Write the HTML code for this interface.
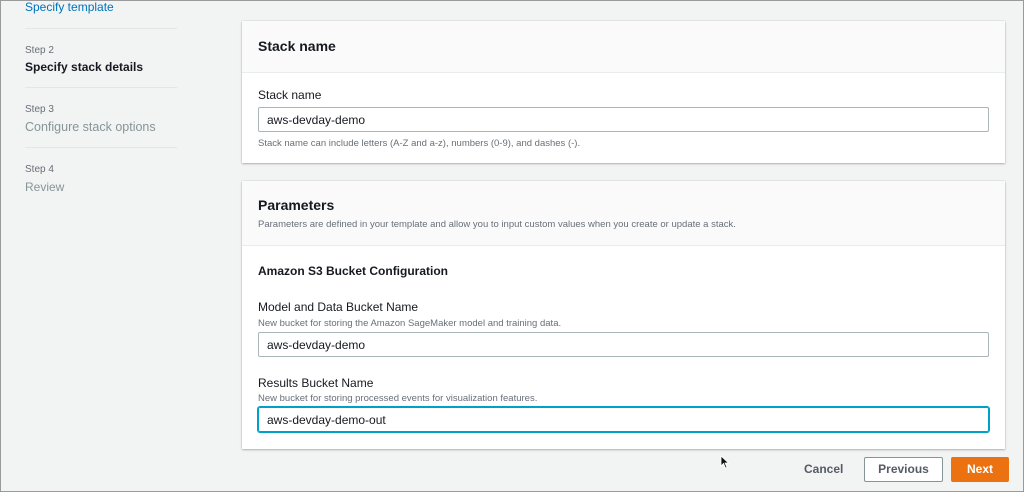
<!DOCTYPE html>
<html><head><style>
*{margin:0;padding:0;box-sizing:border-box}
body{width:1024px;height:492px;background:#f2f3f3;font-family:"Liberation Sans",Arial,sans-serif;position:relative;overflow:hidden;border:1px solid #9a9a9a;color:#16191f}
.a{position:absolute;white-space:nowrap}
.hr{position:absolute;left:24px;width:152px;height:1px;background:#e4e6e6}
.panel{position:absolute;left:241px;width:763px;background:#fff;box-shadow:0 1px 2px rgba(0,0,0,.25),0 0 1px rgba(0,0,0,.2)}
.ph{background:#fafafa;border-bottom:1px solid #eaeded}
.inp{position:absolute;left:16px;width:731px;height:25px;border:1px solid #aab7b8;border-radius:2px;font-size:12px;padding:5px 8px}
.small{font-size:9.5px;color:#687078}
</style></head><body>
<div class="a" style="left:24px;top:-1px;font-size:12px;color:#0073bb">Specify template</div>
<div class="hr" style="top:27px"></div>
<div class="a" style="left:24px;top:44px;font-size:10px;color:#687078">Step 2</div>
<div class="a" style="left:24px;top:59px;font-size:12px;font-weight:bold">Specify stack details</div>
<div class="hr" style="top:86px"></div>
<div class="a" style="left:24px;top:103px;font-size:10px;color:#687078">Step 3</div>
<div class="a" style="left:24px;top:119px;font-size:12.5px;color:#879596">Configure stack options</div>
<div class="hr" style="top:146px"></div>
<div class="a" style="left:24px;top:163px;font-size:10px;color:#687078">Step 4</div>
<div class="a" style="left:24px;top:179px;font-size:12px;color:#879596">Review</div>

<div class="panel" style="top:20px;height:142px">
  <div class="ph" style="height:52px"><div class="a" style="left:16px;top:17px;font-size:14px;font-weight:bold">Stack name</div></div>
  <div class="a" style="left:16px;top:67px;font-size:12px">Stack name</div>
  <div class="inp" style="top:86px">aws-devday-demo</div>
  <div class="a small" style="left:16px;top:117px">Stack name can include letters (A-Z and a-z), numbers (0-9), and dashes (-).</div>
</div>

<div class="panel" style="top:180px;height:268px">
  <div class="ph" style="height:65px">
    <div class="a" style="left:16px;top:16px;font-size:14px;font-weight:bold">Parameters</div>
    <div class="a small" style="left:16px;top:38px">Parameters are defined in your template and allow you to input custom values when you create or update a stack.</div>
  </div>
  <div class="a" style="left:16px;top:83px;font-size:12px;font-weight:bold">Amazon S3 Bucket Configuration</div>
  <div class="a" style="left:16px;top:119px;font-size:12px">Model and Data Bucket Name</div>
  <div class="a small" style="left:16px;top:137px">New bucket for storing the Amazon SageMaker model and training data.</div>
  <div class="inp" style="top:151px">aws-devday-demo</div>
  <div class="a" style="left:16px;top:195px;font-size:12px">Results Bucket Name</div>
  <div class="a small" style="left:16px;top:212px">New bucket for storing processed events for visualization features.</div>
  <div class="inp" style="top:226px;border:1px solid #00a1c9;box-shadow:0 0 0 1px #00a1c9">aws-devday-demo-out</div>
</div>

<svg class="a" style="left:719px;top:454px" width="10" height="14" viewBox="0 0 10 14"><path d="M1 1 L1 11 L3.5 8.5 L5.5 13 L7 12.3 L5 8 L8.5 8 Z" fill="#111" stroke="#fff" stroke-width=".8"/></svg>
<div class="a" style="left:803px;top:461px;font-size:12px;font-weight:bold;color:#545b64">Cancel</div>
<div class="a" style="left:863px;top:456px;width:79px;height:25px;border:1px solid #879596;border-radius:2px;background:#fff;font-size:12px;font-weight:bold;color:#545b64;text-align:center;line-height:23px">Previous</div>
<div class="a" style="left:950px;top:456px;width:58px;height:25px;background:#ec7211;border-radius:2px;font-size:12px;font-weight:bold;color:#fff;text-align:center;line-height:25px">Next</div>
</body></html>
